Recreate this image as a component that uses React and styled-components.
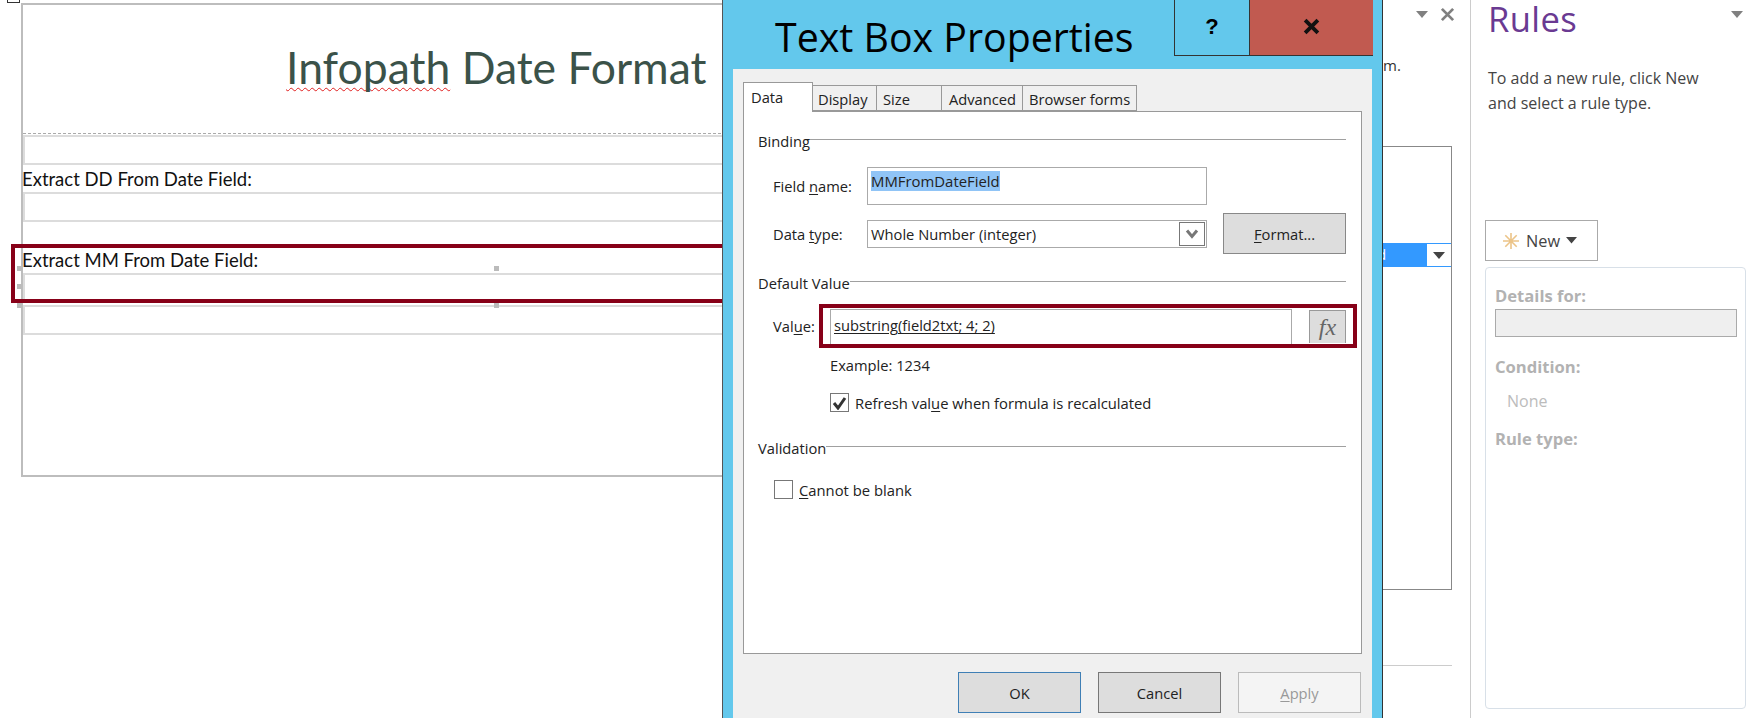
import React from 'react';
import styled, { createGlobalStyle } from 'styled-components';

const Global = createGlobalStyle`
  html, body { margin: 0; padding: 0; background: #fff; overflow: hidden; }
  #root { width: 1749px; height: 718px; }
  * { box-sizing: border-box; }
`;

const Page = styled.div`
  display: flex;
  width: 1749px;
  height: 718px;
  overflow: hidden;
  font-family: "Open Sans", "Noto Sans", sans-serif;
  color: #222;
`;

/* ---------- form canvas ---------- */
const Canvas = styled.div`
  position: relative;
  flex: 0 0 722px;
  height: 718px;
  overflow: hidden;
  padding: 3px 0 0 21px;
  font-family: Lato, "Open Sans", sans-serif;
`;
const CornerHandle = styled.div`
  position: absolute;
  left: 7px;
  top: -5px;
  width: 13px;
  height: 8px;
  border: 1px solid #333;
`;
const FormFrame = styled.div`
  width: 760px;
  height: 474px;
  border: 2px solid #bdbdbd;
  border-right: 0;
`;
const TitleCell = styled.div`
  height: 129px;
  padding: 31px 0 0 263px;
  border-bottom: 1px dashed #aaa;
`;
const FormTitle = styled.h1`
  margin: 0;
  font-size: 44.5px;
  line-height: 62px;
  font-weight: 400;
  color: #3b5249;
  white-space: nowrap;
`;
const Misspelled = styled.span`
  text-decoration: underline wavy #e02020 1px;
  text-underline-offset: 3px;
  text-decoration-skip-ink: none;
`;
const FieldBox = styled.div`
  height: 30px;
  margin-top: ${p => p.$top || 0}px;
  border: 2px solid #dcdcdc;
  background: #fff;
`;
const FieldLabel = styled.div`
  height: 27px;
  margin-top: ${p => p.$top || 0}px;
  padding-top: 4px;
  margin-left: -1px;
  font-size: 18.5px;
  line-height: 20px;
  color: #111;
  white-space: nowrap;
`;
const Handle = styled.span`
  position: absolute;
  left: ${p => p.$x}px;
  top: ${p => p.$y}px;
  width: 5px;
  height: 5px;
  background: #bbb;
`;
const RedHighlight = styled.div`
  position: absolute;
  left: 11px;
  top: 244px;
  width: 715px;
  height: 59px;
  border: 4px solid #870018;
`;

/* ---------- dialog ---------- */
const Dialog = styled.div`
  flex: 0 0 661px;
  min-width: 0;
  height: 718px;
  display: flex;
  flex-direction: column;
  background: #63c8ec;
  border-left: 1px solid #555;
  border-right: 1px solid #333;
`;
const TitleBar = styled.div`
  flex: 0 0 69px;
  display: flex;
  align-items: flex-start;
  justify-content: space-between;
  padding-left: 52px;
`;
const DialogTitle = styled.div`
  margin-top: 12px;
  font-size: 39.3px;
  line-height: 50px;
  color: #000;
  white-space: nowrap;
`;
const WindowButtons = styled.div`
  display: flex;
  height: 56px;
  border: 1px solid #333;
  border-top: 0;
  border-right: 0;
  margin-right: 9px;
`;
const WindowButton = styled.div`
  width: ${p => p.$w}px;
  display: flex;
  align-items: center;
  justify-content: center;
  padding-bottom: 2px;
  background: ${p => p.$bg};
  border-right: ${p => (p.$sep ? '1px solid #333' : '0')};
  font: 700 22px "Liberation Sans", sans-serif;
  color: #000;
`;
const Client = styled.div`
  flex: 1;
  min-width: 0;
  margin: 0 10px;
  padding: 14px 11px 0 10px;
  background: #f0f0f0;
`;
const Tabs = styled.div`
  display: flex;
  align-items: flex-end;
  height: 28px;
  position: relative;
  z-index: 1;
`;
const Tab = styled.div`
  width: ${p => p.$w}px;
  height: ${p => (p.$active ? 30 : 26)}px;
  margin-bottom: ${p => (p.$active ? -1 : 0)}px;
  padding: ${p => (p.$active ? 4 : 3)}px 0 0 ${p => p.$pad}px;
  font-size: 14.7px;
  line-height: 20px;
  background: ${p => (p.$active ? '#fff' : '#f0f0f0')};
  border: 1px solid #999;
  border-left-width: ${p => (p.$active ? 1 : 0)}px;
  border-bottom-width: ${p => (p.$active ? 0 : 1)}px;
  white-space: nowrap;
`;
const TabPanel = styled.div`
  width: 619px;
  height: 543px;
  padding: 19px 15px 0 15px;
  background: #fff;
  border: 1px solid #999;
`;
const SectionHead = styled.div`
  display: flex;
  align-items: center;
  height: 20px;
  margin-top: ${p => p.$top || 0}px;
  margin-left: -1px;
  font-size: 14.7px;
  white-space: nowrap;
`;
const HeadRule = styled.span`
  flex: 1;
  height: 1px;
  margin-bottom: 3px;
  background: #a0a0a0;
`;
const Row = styled.div`
  display: flex;
  align-items: center;
  margin-top: ${p => p.$top || 0}px;
  height: ${p => p.$h}px;
`;
const RowLabel = styled.div`
  flex: 0 0 ${p => p.$w}px;
  padding-left: ${p => p.$pad}px;
  font-size: 14.7px;
  white-space: nowrap;
`;
const U = styled.span`
  text-decoration: underline;
  text-underline-offset: 2px;
`;
const NameInput = styled.div`
  width: 340px;
  height: 38px;
  padding: 3px 3px;
  background: #fff;
  border: 1px solid #aaa;
  font-size: 14.9px;
  line-height: 20px;
`;
const Selected = styled.span`
  display: inline-block;
  background: #90c4f6;
  color: #222;
`;
const TypeSelect = styled.div`
  flex: 0 0 340px;
  height: 28px;
  margin-right: 16px;
  display: flex;
  align-items: center;
  justify-content: space-between;
  padding: 1px 1px 1px 3px;
  background: #fff;
  border: 1px solid #aaa;
  font-size: 14.7px;
`;
const SelectArrow = styled.div`
  width: 26px;
  height: 24px;
  display: flex;
  align-items: center;
  justify-content: center;
  border: 1px solid #777;
`;
const GreyButton = styled.div`
  flex: 0 0 123px;
  width: 123px;
  height: 41px;
  display: flex;
  align-items: center;
  justify-content: center;
  background: ${p => (p.$disabled ? '#f4f4f4' : '#dddddd')};
  border: 1px solid ${p => p.$edge || '#888'};
  color: ${p => (p.$disabled ? '#999' : '#222')};
  font-size: 14.7px;
`;
const RedBox = styled.div`
  flex: 0 0 535px;
  height: 44px;
  display: flex;
  padding: 1px 7px 0 7px;
  border: 4px solid #870018;
`;
const ValueInput = styled.div`
  width: 462px;
  height: 35px;
  padding: 0 3px;
  border: 1px solid #aaa;
  border-bottom: 0;
  font-size: 14.7px;
  line-height: 30px;
  text-decoration: underline;
  text-underline-offset: 2px;
  white-space: nowrap;
`;
const FxButton = styled.div`
  width: 37px;
  height: 33px;
  margin: 1px 0 0 17px;
  display: flex;
  align-items: center;
  justify-content: center;
  background: #dddddd;
  border: 1px solid #999;
  border-bottom: 0;
  font: italic 400 24px "Liberation Serif", serif;
  color: #666;
`;
const Note = styled.div`
  height: 20px;
  margin: 7px 0 0 71px;
  font-size: 14.7px;
  line-height: 20px;
`;
const CheckRow = styled.div`
  display: flex;
  align-items: center;
  gap: 6px;
  height: 19px;
  margin: ${p => p.$top}px 0 0 ${p => p.$left}px;
  font-size: 14.8px;
  white-space: nowrap;
`;
const CheckBox = styled.div`
  width: 19px;
  height: 19px;
  display: flex;
  align-items: center;
  justify-content: center;
  background: #fff;
  border: 1px solid #777;
`;
const Footer = styled.div`
  display: flex;
  justify-content: flex-end;
  gap: 17px;
  margin-top: 18px;
`;

/* ---------- middle pane ---------- */
const MiddlePane = styled.div`
  flex: 0 0 88px;
  height: 718px;
  border-right: 1px solid #ccc;
  font-size: 15px;
`;
const PaneTools = styled.div`
  height: 28px;
  display: flex;
  align-items: center;
  gap: 12px;
  padding-left: 33px;
`;
const PaneHint = styled.div`
  height: 118px;
  padding-top: 26px;
  line-height: 22px;
  color: #333;
`;
const ListBox = styled.div`
  width: 69px;
  height: 444px;
  padding-top: 96px;
  border: 1px solid #888;
  border-left: 0;
`;
const ListRow = styled.div`
  height: 24px;
  display: flex;
  justify-content: space-between;
  background: #3399ff;
  padding: 1px 0 1px 0;
`;
const ListText = styled.span`
  width: 3px;
  overflow: hidden;
  color: #fff;
  font-size: 14px;
  line-height: 22px;
  direction: rtl;
`;
const ListArrow = styled.div`
  width: 24px;
  display: flex;
  align-items: center;
  justify-content: center;
  background: #fff;
`;
const PaneRule = styled.div`
  width: 69px;
  height: 1px;
  margin-top: 75px;
  background: #ccc;
`;

/* ---------- rules pane ---------- */
const RulesPane = styled.div`
  flex: 0 0 278px;
  height: 718px;
  padding: 0 3px 0 14px;
  color: #444;
`;
const RulesHead = styled.div`
  height: 66px;
  display: flex;
  align-items: flex-start;
  justify-content: space-between;
  padding: 0 3px 0 3px;
`;
const RulesTitle = styled.div`
  font-size: 34.6px;
  line-height: 38px;
  letter-spacing: 0.4px;
  color: #6a3a92;
`;
const ArrowWrap = styled.div`
  display: flex;
  padding-top: 11px;
`;
const RulesText = styled.p`
  margin: 0 0 0 3px;
  width: 235px;
  height: 154px;
  font-size: 16px;
  line-height: 25px;
  color: #444;
`;
const NewButton = styled.div`
  width: 113px;
  height: 41px;
  display: flex;
  align-items: center;
  padding-left: 16px;
  gap: 6px;
  border: 1px solid #aaa;
  font-size: 16.3px;
`;
const Details = styled.div`
  width: 261px;
  height: 442px;
  margin-top: 6px;
  padding: 18px 8px 0 9px;
  border: 1px solid #d8e0e8;
  border-radius: 4px;
`;
const DetailHead = styled.div`
  height: 20px;
  margin-top: ${p => p.$top || 0}px;
  font-size: 16.6px;
  line-height: 20px;
  font-weight: 700;
  color: #b2b2b2;
  white-space: nowrap;
`;
const DisabledField = styled.div`
  height: 28px;
  margin-top: 3px;
  background: #efefef;
  border: 1px solid #aaa;
`;
const NoneText = styled.div`
  height: 20px;
  margin: 14px 0 0 12px;
  font-size: 16px;
  line-height: 20px;
  color: #bcbcbc;
`;

const Triangle = ({ w = 12, c = '#808080' }) => (
  <svg width={w} height={w / 2 + 1} viewBox="0 0 12 7"><path d="M0 0h12L6 7z" fill={c} /></svg>
);

const CloseGlyph = ({ size, c, sw }) => (
  <svg width={size} height={size} viewBox="0 0 16 16">
    <path d="M2 2l12 12M14 2L2 14" stroke={c} strokeWidth={sw} fill="none" />
  </svg>
);

const Spark = () => (
  <svg width="18" height="18" viewBox="0 0 18 18" stroke="#ecc488" strokeWidth="1.6" fill="none">
    <path d="M9 1v16M1 9h16M3.3 3.3l11.4 11.4M14.7 3.3L3.3 14.7" />
  </svg>
);

const Check = () => (
  <svg width="15" height="14" viewBox="0 0 15 14">
    <path d="M2 7l4 5 7-10" stroke="#333" strokeWidth="3" fill="none" />
  </svg>
);

const Chevron = () => (
  <svg width="14" height="10" viewBox="0 0 14 10">
    <path d="M2 1.5l5 6 5-6" stroke="#777" strokeWidth="3" fill="none" />
  </svg>
);

export default function App() {
  return (
    <Page>
      <Global />
      <Canvas>
        <CornerHandle />
        <FormFrame>
          <TitleCell>
            <FormTitle><Misspelled>Infopath</Misspelled> Date Format</FormTitle>
          </TitleCell>
          <FieldBox $top={1} />
          <FieldLabel>Extract DD From Date Field:</FieldLabel>
          <FieldBox />
          <FieldLabel $top={24}>Extract MM From Date Field:</FieldLabel>
          <FieldBox />
          <FieldBox $top={2} />
        </FormFrame>
        <Handle $x={17} $y={266} />
        <Handle $x={17} $y={284} />
        <Handle $x={17} $y={303} />
        <Handle $x={494} $y={266} />
        <Handle $x={494} $y={303} />
        <RedHighlight />
      </Canvas>

      <Dialog>
        <TitleBar>
          <DialogTitle>Text Box Properties</DialogTitle>
          <WindowButtons>
            <WindowButton $w={75} $bg="#63c8ec" $sep>?</WindowButton>
            <WindowButton $w={123} $bg="#c15a50"><CloseGlyph size={17} c="#111" sw={3.6} /></WindowButton>
          </WindowButtons>
        </TitleBar>
        <Client>
          <Tabs>
            <Tab $w={70} $pad={7} $active>Data</Tab>
            <Tab $w={64} $pad={5}>Display</Tab>
            <Tab $w={65} $pad={6}>Size</Tab>
            <Tab $w={81} $pad={7}>Advanced</Tab>
            <Tab $w={114} $pad={6}>Browser forms</Tab>
          </Tabs>
          <TabPanel>
            <SectionHead>Binding<HeadRule /></SectionHead>
            <Row $top={16} $h={38}>
              <RowLabel $w={108} $pad={14}>Field <U>n</U>ame:</RowLabel>
              <NameInput><Selected>MMFromDateField</Selected></NameInput>
            </Row>
            <Row $top={8} $h={41}>
              <RowLabel $w={108} $pad={14}>Data <U>t</U>ype:</RowLabel>
              <TypeSelect>
                Whole Number (integer)
                <SelectArrow><Chevron /></SelectArrow>
              </TypeSelect>
              <GreyButton><span><U>F</U>ormat...</span></GreyButton>
            </Row>
            <SectionHead $top={19}>Default Value<HeadRule /></SectionHead>
            <Row $top={11} $h={44}>
              <RowLabel $w={60} $pad={14}>Val<U>u</U>e:</RowLabel>
              <RedBox>
                <ValueInput>substring(field2txt; 4; 2)</ValueInput>
                <FxButton>fx</FxButton>
              </RedBox>
            </Row>
            <Note>Example: 1234</Note>
            <CheckRow $top={18} $left={71}>
              <CheckBox><Check /></CheckBox>
              <span>Refresh val<U>u</U>e when formula is recalculated</span>
            </CheckRow>
            <SectionHead $top={26}>Validation<HeadRule /></SectionHead>
            <CheckRow $top={22} $left={15}>
              <CheckBox />
              <span><U>C</U>annot be blank</span>
            </CheckRow>
          </TabPanel>
          <Footer>
            <GreyButton $edge="#3f7fb5">OK</GreyButton>
            <GreyButton $edge="#777">Cancel</GreyButton>
            <GreyButton $disabled $edge="#bbb"><span><U>A</U>pply</span></GreyButton>
          </Footer>
        </Client>
      </Dialog>

      <MiddlePane>
        <PaneTools>
          <Triangle />
          <CloseGlyph size={15} c="#808080" sw={3} />
        </PaneTools>
        <PaneHint>m.</PaneHint>
        <ListBox>
          <ListRow>
            <ListText>d</ListText>
            <ListArrow><Triangle c="#444" /></ListArrow>
          </ListRow>
        </ListBox>
        <PaneRule />
      </MiddlePane>

      <RulesPane>
        <RulesHead>
          <RulesTitle>Rules</RulesTitle>
          <ArrowWrap><Triangle /></ArrowWrap>
        </RulesHead>
        <RulesText>To add a new rule, click New and select a rule type.</RulesText>
        <NewButton>
          <Spark />
          New
          <Triangle w={11} c="#444" />
        </NewButton>
        <Details>
          <DetailHead>Details for:</DetailHead>
          <DisabledField />
          <DetailHead $top={20}>Condition:</DetailHead>
          <NoneText>None</NoneText>
          <DetailHead $top={18}>Rule type:</DetailHead>
        </Details>
      </RulesPane>
    </Page>
  );
}
